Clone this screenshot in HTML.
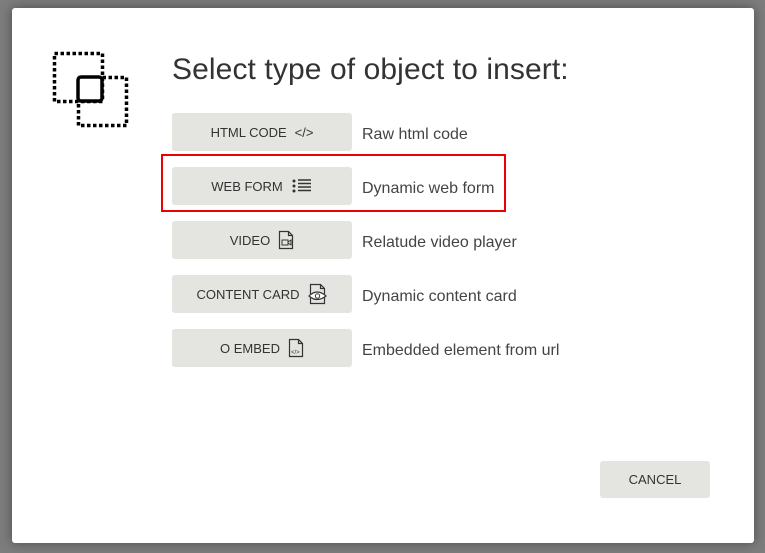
<!DOCTYPE html>
<html><head><style>
body{margin:0;width:765px;height:553px;background:#7d7d7d;font-family:"Liberation Sans",sans-serif;position:relative;overflow:hidden}
.dlg{position:absolute;left:12px;top:8px;width:742px;height:535px;background:#fff;border-radius:3px;box-shadow:0 0 12px rgba(0,0,0,.4)}
h1{position:absolute;left:172px;top:53px;margin:0;font-weight:normal;font-size:30px;color:#333;letter-spacing:0.1px}
.btn{position:absolute;left:172px;width:180px;height:38px;background:#e4e4e0;border-radius:3px;font-size:13px;color:#333;display:flex;align-items:center;justify-content:center;gap:8px}
.lbl{position:absolute;left:362px;font-size:16px;color:#444}
.red{position:absolute;left:161px;top:154px;width:345px;height:58px;border:2px solid #e00;box-sizing:border-box}
.cancel{position:absolute;left:600px;top:461px;width:110px;height:37px;background:#e4e4e0;border-radius:3px;font-size:13px;color:#333;display:flex;align-items:center;justify-content:center}
</style></head><body>
<div class="dlg"></div>
<svg style="position:absolute;left:50px;top:50px" width="82" height="80">
<rect x="4.5" y="3.5" width="48" height="48" fill="none" stroke="#000" stroke-width="3.5" stroke-dasharray="3.5 2.5"/>
<rect x="28.5" y="27.5" width="48" height="48" fill="none" stroke="#000" stroke-width="3.5" stroke-dasharray="3.5 2.5"/>
<rect x="28" y="27" width="24" height="24" rx="3" fill="#fff" stroke="#000" stroke-width="3.5"/>
</svg>
<h1>Select type of object to insert:</h1>
<div class="btn" style="top:113px">HTML CODE <span style="font-size:13px">&lt;/&gt;</span></div>
<div class="lbl" style="top:126px">Raw html code</div>
<div class="btn" style="top:167px">WEB FORM <svg width="22" height="16"><circle cx="3" cy="3" r="1.5" fill="#333"/><circle cx="3" cy="8" r="1.5" fill="#333"/><circle cx="3" cy="13" r="1.5" fill="#333"/><path d="M7 2h13M7 5.5h13M7 9h13M7 12.5h13" stroke="#333" stroke-width="1.4"/></svg></div>
<div class="lbl" style="top:180px">Dynamic web form</div>
<div class="red"></div>
<div class="btn" style="top:221px">VIDEO <svg width="16" height="20"><path d="M1.5 1.5h9l4 4v13h-13z M10.5 1.5v4h4" fill="none" stroke="#333" stroke-width="1.2"/><rect x="4" y="10" width="6" height="5" fill="none" stroke="#333"/><path d="M10 12l3-2v5l-3-2" fill="none" stroke="#333"/></svg></div>
<div class="lbl" style="top:234px">Relatude video player</div>
<div class="btn" style="top:275px">CONTENT CARD <svg width="20" height="22"><path d="M2.5 1.5h10l4 4v15h-14z M12.5 1.5v4h4" fill="none" stroke="#333" stroke-width="1.2"/><path d="M1 13q8-8 17 0q-9 7-17 0z" fill="#fff" stroke="#333" stroke-width="1.2"/><circle cx="9.5" cy="13" r="2.2" fill="none" stroke="#333"/></svg></div>
<div class="lbl" style="top:288px">Dynamic content card</div>
<div class="btn" style="top:329px">O EMBED <svg width="16" height="20"><path d="M1.5 1.5h9l4 4v13h-13z M10.5 1.5v4h4" fill="none" stroke="#333" stroke-width="1.2"/><text x="3" y="16" font-size="6" fill="#333" font-family="Liberation Sans">&lt;/&gt;</text></svg></div>
<div class="lbl" style="top:342px">Embedded element from url</div>
<div class="cancel">CANCEL</div>
</body></html>
